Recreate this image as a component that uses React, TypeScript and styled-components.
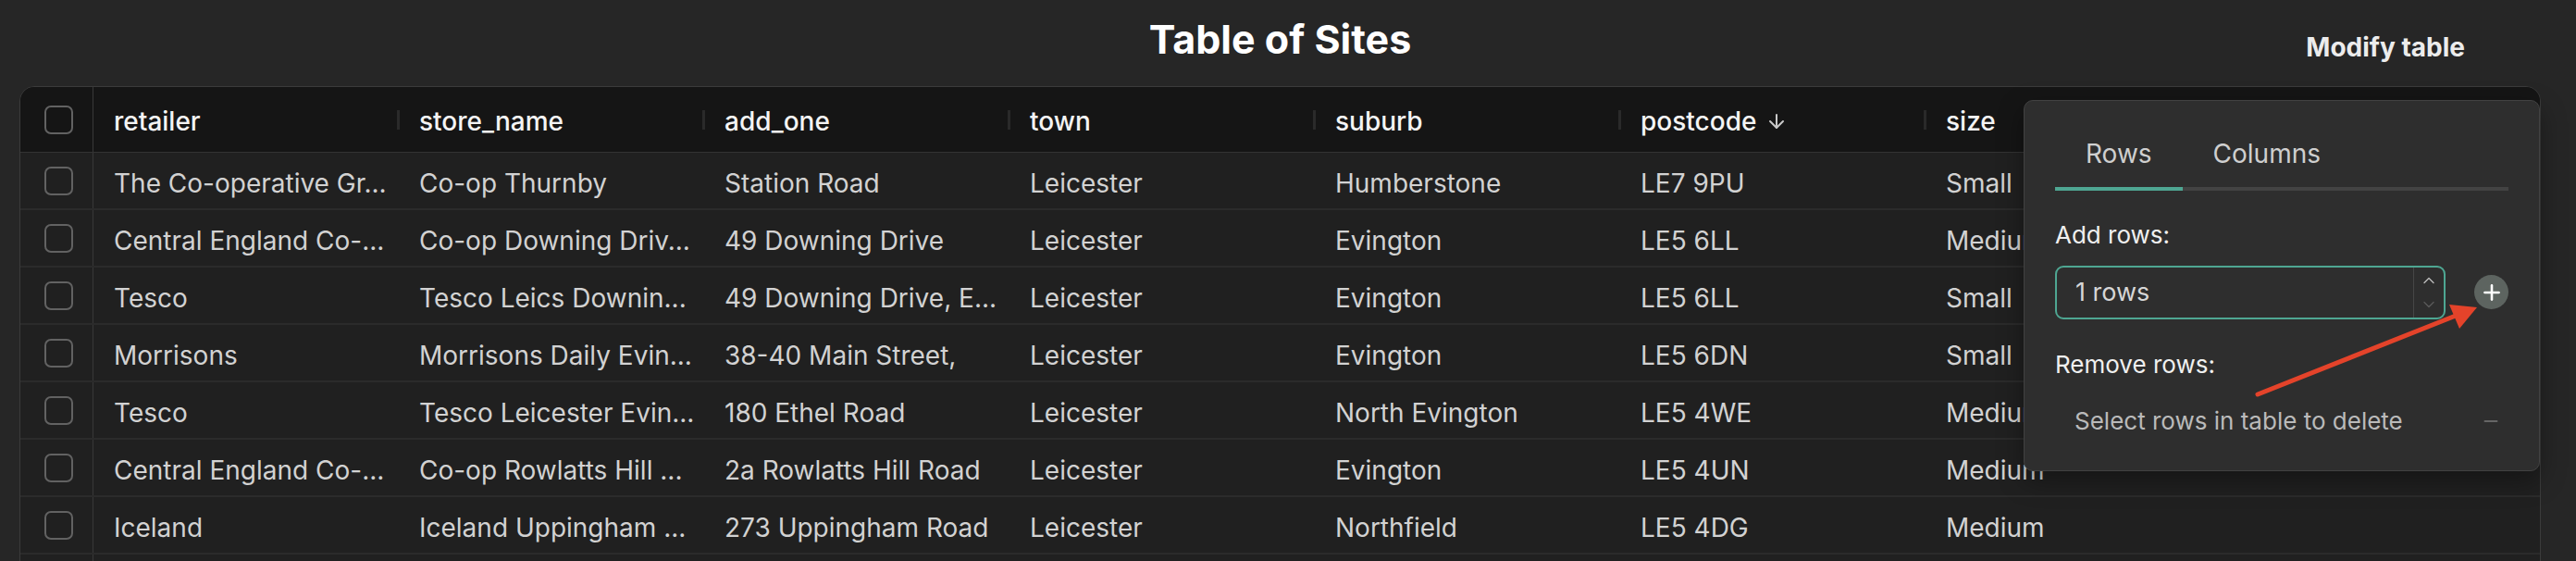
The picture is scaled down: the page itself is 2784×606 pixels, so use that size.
import styled, { createGlobalStyle } from "styled-components";
import { ArrowDown, ChevronUp, ChevronDown, Plus, Minus } from "lucide-react";

const GlobalStyle = createGlobalStyle`
  * {
    box-sizing: border-box;
  }

  body {
    margin: 0;
    background: #262626;
    font-family: "Inter", "Noto Sans", sans-serif;
  }
`;

const columns = ["retailer", "store_name", "add_one", "town", "suburb", "postcode", "size"];

const rows = [
  ["The Co-operative Gr...", "Co-op Thurnby", "Station Road", "Leicester", "Humberstone", "LE7 9PU", "Small"],
  ["Central England Co-...", "Co-op Downing Driv...", "49 Downing Drive", "Leicester", "Evington", "LE5 6LL", "Medium"],
  ["Tesco", "Tesco Leics Downin...", "49 Downing Drive, E...", "Leicester", "Evington", "LE5 6LL", "Small"],
  ["Morrisons", "Morrisons Daily Evin...", "38-40 Main Street,", "Leicester", "Evington", "LE5 6DN", "Small"],
  ["Tesco", "Tesco Leicester Evin...", "180 Ethel Road", "Leicester", "North Evington", "LE5 4WE", "Medium"],
  ["Central England Co-...", "Co-op Rowlatts Hill ...", "2a Rowlatts Hill Road", "Leicester", "Evington", "LE5 4UN", "Medium"],
  ["Iceland", "Iceland Uppingham ...", "273 Uppingham Road", "Leicester", "Northfield", "LE5 4DG", "Medium"],
  ["", "", "", "", "", "", ""],
];

const App = () => {
  return (
    <>
      <GlobalStyle />
      <Page>
        <TopBar>
          <span />
          <Title>Table of Sites</Title>
          <ModifyButton>Modify table</ModifyButton>
        </TopBar>

        <TableFrame>
          <HeaderRow>
            <CheckCell>
              <Checkbox />
            </CheckCell>
            {columns.map((col) => (
              <HeadCell key={col}>
                {col}
                {col === "postcode" && <ArrowDown size={24} strokeWidth={2} color="#c9c9c9" />}
              </HeadCell>
            ))}
            <HeadCell />
          </HeaderRow>
          {rows.map((row, i) => (
            <Row key={i}>
              <CheckCell>
                <Checkbox />
              </CheckCell>
              {row.map((value, j) => (
                <Cell key={j}>{value}</Cell>
              ))}
              <Cell />
            </Row>
          ))}
        </TableFrame>

        <Panel>
          <Tabs>
            <Tab $active>Rows</Tab>
            <Tab>Columns</Tab>
          </Tabs>

          <Label>Add rows:</Label>
          <AddLine>
            <NumberField>
              <FieldText>1 rows</FieldText>
              <Stepper>
                <ChevronUp size={20} strokeWidth={1.6} color="#bcbcbc" />
                <ChevronDown size={20} strokeWidth={1.6} color="#5a5a5a" />
              </Stepper>
            </NumberField>
            <RoundButton>
              <Plus size={26} strokeWidth={2.4} color="#ffffff" />
            </RoundButton>
          </AddLine>

          <Label $gap>Remove rows:</Label>
          <RemoveLine>
            <Hint>Select rows in table to delete</Hint>
            <Minus size={22} strokeWidth={2.4} color="#666666" />
          </RemoveLine>
        </Panel>

        <Pointer width="280" height="140" viewBox="0 0 280 140">
          <line x1="20" y1="116" x2="234" y2="31" stroke="#e4432a" strokeWidth="5" strokeLinecap="round" />
          <polygon points="257,22 227,19 238,45" fill="#e4432a" />
        </Pointer>
      </Page>
    </>
  );
};

const Page = styled.div`
  position: relative;
  height: 606px;
  overflow: hidden;
  padding: 0 38px 0 21px;
`;

const TopBar = styled.div`
  display: grid;
  grid-template-columns: 1fr auto 1fr;
  height: 93px;
  align-items: start;
`;

const Title = styled.h1`
  margin: 0;
  padding-top: 17px;
  font-size: 43px;
  font-weight: 700;
  color: #ffffff;
  line-height: 1.2;
`;

const ModifyButton = styled.button`
  justify-self: end;
  margin: 35px 82px 0 0;
  padding: 0;
  border: none;
  background: none;
  font-family: "Inter", sans-serif;
  font-size: 28px;
  font-weight: 700;
  color: #ececec;
  line-height: 1.2;
  cursor: pointer;
`;

const TableFrame = styled.div`
  border: 1px solid #3b3b3b;
  border-radius: 16px;
  background: #202020;
  overflow: hidden;
`;

const HeaderRow = styled.div`
  display: grid;
  grid-template-columns: 79px repeat(7, 330px) 1fr;
  height: 71px;
  background: #151515;
  border-bottom: 1px solid #333333;
`;

const Row = styled.div`
  display: grid;
  grid-template-columns: 79px repeat(7, 330px) 1fr;
  height: 62px;
  border-bottom: 2px solid #2b2b2b;
`;

const CheckCell = styled.div`
  display: flex;
  align-items: center;
  justify-content: center;
  border-right: 1px solid #383838;
  padding-left: 4px;
`;

const Checkbox = styled.span`
  width: 31px;
  height: 31px;
  border: 2px solid #626262;
  border-radius: 7px;
`;

const HeadCell = styled.div`
  position: relative;
  display: flex;
  align-items: center;
  gap: 10px;
  padding: 3px 22px 0;
  font-size: 28px;
  font-weight: 500;
  color: #f4f4f4;

  &::after {
    content: "";
    position: absolute;
    right: -1px;
    top: 25px;
    width: 3px;
    height: 21px;
    background: #2a2a2a;
  }
`;

const Cell = styled.div`
  display: flex;
  align-items: center;
  padding: 6px 22px 0;
  font-size: 28px;
  color: #d2d2d2;
  white-space: nowrap;
  overflow: hidden;
  text-overflow: ellipsis;
`;

const Panel = styled.div`
  position: absolute;
  top: 108px;
  right: 39px;
  width: 558px;
  height: 401px;
  padding: 41px 33px 0;
  background: #2e2e2e;
  border: 1px solid #424242;
  border-radius: 10px;
  box-shadow: 0 10px 28px rgba(0, 0, 0, 0.35);
`;

const Tabs = styled.div`
  display: flex;
  border-bottom: 4px solid #434343;
`;

const Tab = styled.div<{ $active?: boolean }>`
  margin-bottom: -4px;
  padding: 0 33px 18px;
  font-size: 28px;
  line-height: 1.2;
  color: #cfcfcf;
  border-bottom: 4px solid ${(p) => (p.$active ? "#4ea692" : "transparent")};
`;

const Label = styled.div<{ $gap?: boolean }>`
  margin-top: ${(p) => (p.$gap ? "33px" : "32px")};
  font-size: 26px;
  line-height: 1.2;
  color: #f0f0f0;
`;

const AddLine = styled.div`
  display: flex;
  align-items: center;
  justify-content: space-between;
  margin-top: 18px;
`;

const NumberField = styled.div`
  display: flex;
  width: 422px;
  height: 58px;
  border: 2px solid #4ea692;
  border-radius: 9px;
`;

const FieldText = styled.span`
  flex: 1;
  display: flex;
  align-items: center;
  padding-left: 20px;
  font-size: 27px;
  color: #d6d6d6;
`;

const Stepper = styled.div`
  display: flex;
  flex-direction: column;
  align-items: center;
  justify-content: center;
  width: 33px;
  border-left: 1px solid #474747;
  gap: 6px;
`;

const RoundButton = styled.button`
  display: flex;
  align-items: center;
  justify-content: center;
  width: 37px;
  height: 37px;
  padding: 0;
  border: none;
  border-radius: 50%;
  background: #5d6460;
  cursor: pointer;
`;

const RemoveLine = styled.div`
  display: flex;
  align-items: center;
  justify-content: space-between;
  height: 58px;
  margin-top: 17px;
  padding: 0 8px 0 21px;
`;

const Hint = styled.span`
  font-size: 26px;
  color: #bababa;
`;

const Pointer = styled.svg`
  position: absolute;
  left: 2420px;
  top: 310px;
  pointer-events: none;
`;

export default App;
